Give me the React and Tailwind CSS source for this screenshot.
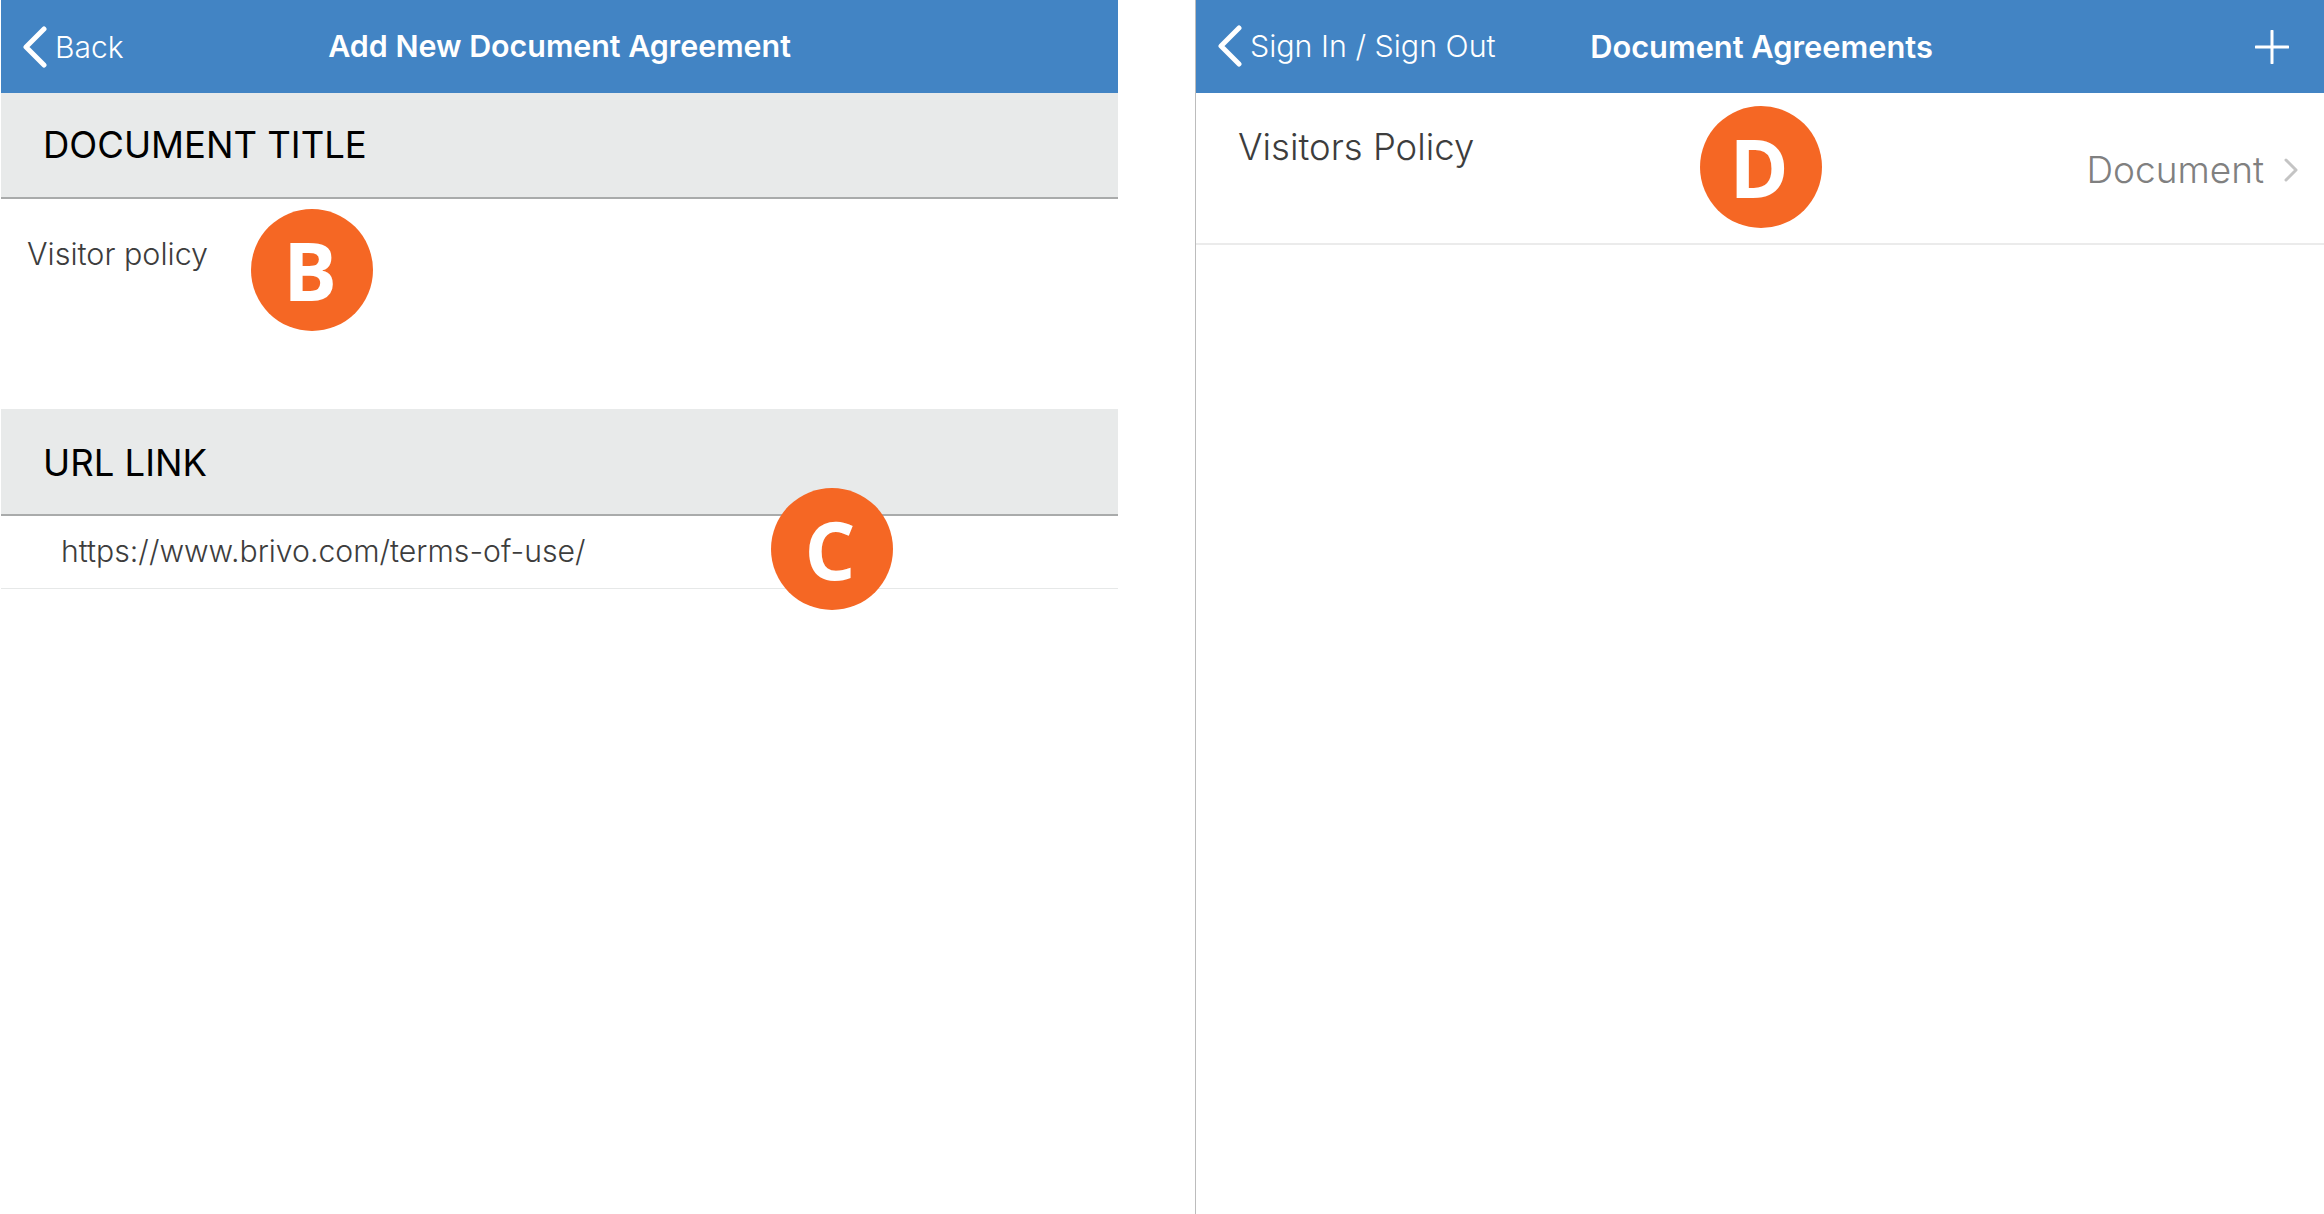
import React from "react";

function BackChevron() {
      return (
            <svg width="26" height="42" viewBox="0 0 26 42" fill="none" className="shrink-0">
                  <path d="M22 3 L4 21 L22 39" stroke="#fff" strokeWidth="5" strokeLinecap="round" strokeLinejoin="round" />
            </svg>
      );
}

function Header({ back, backSize, title, titleClass, gap, right }) {
      return (
            <div className="relative flex h-[93px] items-center bg-[#4284c4] text-white">
                  <div className={`flex items-center font-light ${backSize} ${gap}`}>
                        <BackChevron />
                        <span className="pt-px">{back}</span>
                  </div>
                  <div className={`absolute inset-x-0 pt-px text-center font-semibold ${titleClass}`}>{title}</div>
                  {right}
            </div>
      );
}

function SectionTitle({ children, height, nudge }) {
      return (
            <div className={`flex items-center border-b-2 border-[#a9abab] bg-[#e8eaea] pl-[42px] text-[36.5px] text-black ${height} ${nudge}`}>
                  {children}
            </div>
      );
}

function Badge({ letter, className }) {
      return (
            <div
                  className={`absolute flex h-[122px] w-[122px] items-center justify-center rounded-full bg-[#f56724] pr-1 font-['Open_Sans'] text-[80px] font-bold text-white ${className}`}
            >
                  {letter}
            </div>
      );
}

export default function App() {
      return (
            <div className="relative flex h-[1214px] w-[2324px] overflow-hidden bg-white font-['Inter',sans-serif]">
                  <div className="ml-px w-[1117px] shrink-0">
                        <Header
                              back="Back"
                              backSize="text-[30px]"
                              title="Add New Document Agreement"
                              titleClass="text-[30.4px]"
                              gap="gap-[7px] pl-[21px]"
                        />
                        <SectionTitle height="h-[106px]" nudge="pt-px">DOCUMENT TITLE</SectionTitle>
                        <div className="h-[210px] pl-[26px] pt-[32px] text-[30.5px] font-light text-[#3d3d3d]">Visitor policy</div>
                        <SectionTitle height="h-[107px]" nudge="pt-[3px]">URL LINK</SectionTitle>
                        <div className="flex h-[73px] items-center border-b border-[#e6e8e8] pl-[60px] text-[30.2px] font-light text-[#3d3d3d]">
                              https://www.brivo.com/terms-of-use/
                        </div>
                  </div>
                  <div className="ml-[77px] min-w-0 flex-1 border-l border-[#bcbcbc]">
                        <Header
                              back="Sign In / Sign Out"
                              backSize="text-[30.4px]"
                              title="Document Agreements"
                              titleClass="pl-[3px] text-[30.8px]"
                              gap="gap-[7px] pl-[21px]"
                              right={
                                    <svg width="34" height="34" viewBox="0 0 34 34" className="absolute right-[35px]" fill="none">
                                          <path d="M17 1 V33 M1 17 H33" stroke="#fff" strokeWidth="3" strokeLinecap="round" />
                                    </svg>
                              }
                        />
                        <div className="flex h-[152px] items-start justify-between border-b-2 border-[#ebebeb]">
                              <div className="pl-[42px] pt-[27px] text-[36.5px] font-light text-[#3d3d3d]">Visitors Policy</div>
                              <div className="flex items-center gap-5 pr-[26px] pt-[49px] text-[37px] font-light text-[#808080]">
                                    <span>Document</span>
                                    <svg width="14" height="24" viewBox="0 0 14 24" fill="none">
                                          <path d="M2 2 L12 12 L2 22" stroke="#c4c4c4" strokeWidth="3" strokeLinecap="round" strokeLinejoin="round" />
                                    </svg>
                              </div>
                        </div>
                  </div>
                  <Badge letter="B" className="left-[251px] top-[209px]" />
                  <Badge letter="C" className="left-[771px] top-[488px]" />
                  <Badge letter="D" className="left-[1700px] top-[106px]" />
            </div>
      );
}
